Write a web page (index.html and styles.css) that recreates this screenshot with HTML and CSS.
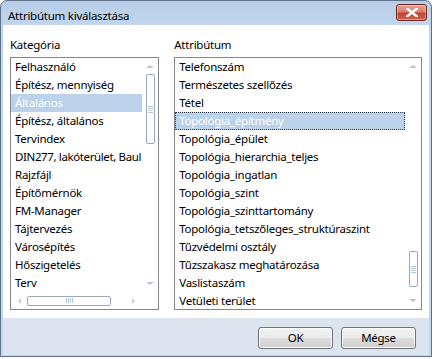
FILE: index.html
```html
<!DOCTYPE html>
<html lang="hu">
<head>
    <meta charset="UTF-8">
    <meta name="viewport" content="width=device-width, initial-scale=1.0">
    <title>Attribútum kiválasztása</title>
    <link rel="stylesheet" href="styles.css">
</head>
<body>

    <div class="window">
        <!-- Címsor -->
        <div class="titlebar">
            <span class="title">Attribútum kiválasztása</span>
            <button class="close-btn" aria-label="Bezárás">
                <svg width="12" height="9" viewBox="0 0 12 9">
                    <path d="M1 0.5 L11 8.5 M11 0.5 L1 8.5" stroke="#ffffff" stroke-width="2.6" stroke-linecap="square" fill="none"/>
                </svg>
            </button>
        </div>

        <div class="client">
            <div class="columns">
                <!-- Kategória lista -->
                <div class="column col-left">
                    <div class="label">Kategória</div>
                    <div class="listbox listbox-h">
                        <ul class="items">
                            <li>Felhasználó</li>
                            <li>Építész, mennyiség</li>
                            <li class="selected">Általános</li>
                            <li>Építész, általános</li>
                            <li>Tervindex</li>
                            <li class="tight">DIN277, lakóterület, Baul</li>
                            <li>Rajzfájl</li>
                            <li>Építőmérnök</li>
                            <li>FM-Manager</li>
                            <li>Tájtervezés</li>
                            <li>Városépítés</li>
                            <li>Hőszigetelés</li>
                            <li>Terv</li>
                        </ul>
                        <div class="vscroll">
                            <div class="arrow"><span class="tri tri-up"></span></div>
                            <div class="track">
                                <div class="thumb thumb-v thumb-left"><span class="grip"></span></div>
                            </div>
                            <div class="arrow"><span class="tri tri-down"></span></div>
                        </div>
                        <div class="hscroll">
                            <div class="arrow"><span class="tri tri-left"></span></div>
                            <div class="track">
                                <div class="thumb thumb-h"><span class="grip"></span></div>
                            </div>
                            <div class="arrow"><span class="tri tri-right"></span></div>
                        </div>
                        <div class="corner"></div>
                    </div>
                </div>

                <!-- Attribútum lista -->
                <div class="column col-right">
                    <div class="label">Attribútum</div>
                    <div class="listbox">
                        <ul class="items">
                            <li>Telefonszám</li>
                            <li>Természetes szellőzés</li>
                            <li>Tétel</li>
                            <li class="selected focused">Topológia_építmény</li>
                            <li>Topológia_épület</li>
                            <li>Topológia_hierarchia_teljes</li>
                            <li>Topológia_ingatlan</li>
                            <li>Topológia_szint</li>
                            <li>Topológia_szinttartomány</li>
                            <li>Topológia_tetszőleges_struktúraszint</li>
                            <li>Tűzvédelmi osztály</li>
                            <li>Tűzszakasz meghatározása</li>
                            <li>Vaslistaszám</li>
                            <li>Vetületi terület</li>
                        </ul>
                        <div class="vscroll">
                            <div class="arrow"><span class="tri tri-up"></span></div>
                            <div class="track">
                                <div class="thumb thumb-v thumb-right"><span class="grip"></span></div>
                            </div>
                            <div class="arrow"><span class="tri tri-down"></span></div>
                        </div>
                    </div>
                </div>
            </div>
        </div>

        <!-- Gombsor -->
        <div class="footer">
            <button class="btn">OK</button>
            <button class="btn">Mégse</button>
        </div>
    </div>

</body>
</html>
```

FILE: styles.css
```css
/* Alap */
body {
    margin: 0;
    background: #ffffff;
    font-family: "Noto Sans", "Open Sans", sans-serif;
    font-size: 11.5px;
    letter-spacing: -0.25px;
    color: #000000;
}

/* Ablak keret */
.window {
    box-sizing: border-box;
    width: 432px;
    height: 357px;
    border: 1px solid #5f7189;
    border-radius: 7px 7px 0 0;
    background: linear-gradient(to bottom, #b7cde7 0px, #c1d6ee 24px, #c2d6ee 100%);
    padding: 0 2px 1px 2px;
    display: flex;
    flex-direction: column;
}

.titlebar {
    height: 24px;
    display: flex;
    align-items: center;
    justify-content: space-between;
    padding: 0 2px 0 5px;
}

.title {
    color: #000000;
    margin-top: 4px;
}

.close-btn {
    width: 31px;
    height: 17px;
    margin-top: -2px;
    border: 1px solid #6d2a25;
    border-radius: 3px;
    background: linear-gradient(to bottom, #e7a496 0%, #d6806f 45%, #c2412e 55%, #d06249 100%);
    box-shadow: inset 0 0 0 1px rgba(255, 255, 255, 0.35);
    display: flex;
    align-items: center;
    justify-content: center;
    padding: 0;
}

/* Kliens terület */
.client {
    background: #ffffff;
    height: 293px;
    box-sizing: border-box;
    padding: 12px 7px 0 7px;
}

.columns {
    display: flex;
    gap: 15px;
}

.col-left { width: 150px; }
.col-right { width: 249px; }

.label {
    height: 16px;
    line-height: 16px;
    margin-bottom: 4px;
}

/* Listák */
.listbox {
    box-sizing: border-box;
    height: 253px;
    border: 1px solid #828790;
    display: grid;
    grid-template-columns: 1fr 16px;
    grid-template-rows: 1fr;
    overflow: hidden;
}

.listbox-h {
    grid-template-rows: 1fr 17px;
}

.items {
    list-style: none;
    margin: 0;
    padding: 0;
    overflow: hidden;
    white-space: nowrap;
}

.items li {
    height: 18px;
    line-height: 18px;
    padding-left: 4px;
    box-sizing: border-box;
}

/* a hosszú sor épp kifér a görgetősávig */
.items li.tight {
    letter-spacing: -0.38px;
}

.items li.selected {
    background: #bcd2ea;
    color: #ffffff;
}

.items li.focused {
    outline: 1px dotted #2b3a4a;
    outline-offset: -1px;
}

/* Görgetősávok */
.vscroll {
    display: flex;
    flex-direction: column;
    align-items: center;
}

.hscroll {
    display: flex;
    align-items: center;
}

.arrow {
    width: 17px;
    height: 17px;
    flex: none;
    display: flex;
    align-items: center;
    justify-content: center;
}

.track {
    flex: 1;
    display: flex;
    flex-direction: column;
    align-items: center;
}

.hscroll .track {
    flex-direction: row;
    align-self: stretch;
    align-items: center;
}

.tri {
    width: 0;
    height: 0;
    border: 4px solid transparent;
}

.tri-up { border-bottom: 3px solid #b7c5d6; border-top-width: 0; }
.tri-down { border-top: 3px solid #b7c5d6; border-bottom-width: 0; }
.tri-left { border-right: 3px solid #c8d2de; border-left-width: 0; border-top-width: 3px; border-bottom-width: 3px; }
.tri-right { border-left: 3px solid #c8d2de; border-right-width: 0; border-top-width: 3px; border-bottom-width: 3px; }

.thumb {
    box-sizing: border-box;
    border: 1px solid #9aa9bd;
    border-radius: 2px;
    background: #ffffff;
    display: flex;
    align-items: center;
    justify-content: center;
}

.thumb-v { width: 9px; }
.thumb-left { height: 70px; margin-top: -1px; }
.thumb-right { height: 36px; margin-top: 176px; }

.thumb-h {
    height: 10px;
    width: 84px;
    margin-left: -1px;
}

.grip {
    width: 5px;
    height: 7px;
    background: repeating-linear-gradient(to bottom, #b9c6d6 0px, #b9c6d6 1px, transparent 1px, transparent 2px);
}

.thumb-h .grip {
    width: 7px;
    height: 5px;
    background: repeating-linear-gradient(to right, #b9c6d6 0px, #b9c6d6 1px, transparent 1px, transparent 2px);
}

.corner { background: #ffffff; }

/* Gombsor */
.footer {
    flex: 1;
    background: #dbe4ef;
    display: flex;
    justify-content: flex-end;
    align-items: flex-start;
    gap: 8px;
    padding: 9px 13px 0 0;
}

.btn {
    width: 75px;
    height: 22px;
    box-sizing: border-box;
    border: 1px solid #707070;
    border-radius: 3px;
    background: linear-gradient(to bottom, #f2f2f2 0%, #ebebeb 50%, #dddddd 50%, #cfcfcf 100%);
    box-shadow: inset 0 0 0 1px #fcfcfc;
    font-family: "Noto Sans", "Open Sans", sans-serif;
    font-size: 11.5px;
    letter-spacing: -0.25px;
    color: #000000;
    padding: 0;
    line-height: 18px;
}
```
